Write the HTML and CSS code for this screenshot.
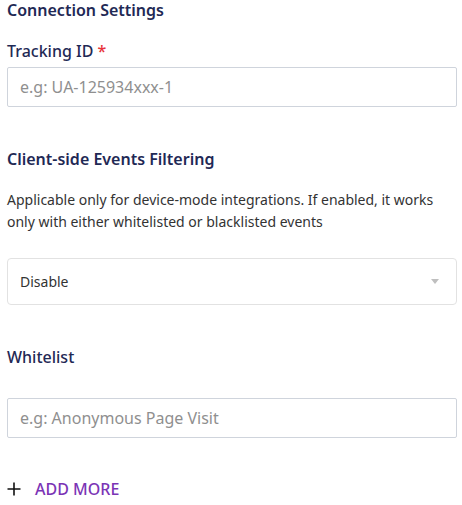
FILE: index.html
```html
<!DOCTYPE html>
<html lang="en">
<head>
<meta charset="utf-8">
<title>Connection Settings</title>
<link rel="stylesheet" href="styles.css">
</head>
<body>
<div class="form">
  <h2 class="section-title">Connection Settings</h2>
  <label class="field-label label-tracking">Tracking ID <span class="req">*</span></label>
  <input class="text-input" type="text" placeholder="e.g: UA-125934xxx-1">

  <h2 class="section-title title-filter">Client-side Events Filtering</h2>
  <p class="desc">Applicable only for device-mode integrations. If enabled, it works only with either whitelisted or blacklisted events</p>
  <div class="select">
    <span class="select-value">Disable</span>
    <span class="select-arrow"></span>
  </div>

  <label class="field-label label-whitelist">Whitelist</label>
  <input class="text-input input-whitelist" type="text" placeholder="e.g: Anonymous Page Visit">

  <div class="add-more">
    <svg class="plus" width="14" height="14" viewBox="0 0 14 14"><path d="M7 0.5V13.5M0.5 7H13.5" stroke="#111" stroke-width="1.6"/></svg>
    <span class="add-text">ADD MORE</span>
  </div>
</div>
</body>
</html>
```
FILE: styles.css
```css
html, body {
  margin: 0;
  padding: 0;
  background: #fff;
}
body {
  font-family: "Noto Sans", "Open Sans", sans-serif;
  color: #333;
}
.form {
  display: flex;
  flex-direction: column;
  padding: 0 5px 0 7px;
}
.section-title {
  margin: 0;
  font-size: 16px;
  line-height: 20px;
  font-weight: 600;
  color: #1f2955;
}
.title-filter {
  margin-top: 42px;
}
.field-label {
  display: block;
  font-size: 16px;
  line-height: 20px;
  font-weight: 500;
  color: #1f2955;
}
.label-tracking {
  margin-top: 21px;
}
.req {
  color: #e8333a;
}
.text-input {
  box-sizing: border-box;
  margin: 6px 0 0 0;
  width: 100%;
  height: 40px;
  border: 1px solid #cfd4dc;
  border-radius: 2px;
  padding: 0 12px;
  font-family: inherit;
  font-size: 16px;
  color: #333;
  outline: none;
}
.text-input::placeholder {
  color: #8f8f8f;
}
.desc {
  margin: 20px 0 0 0;
  font-size: 14px;
  line-height: 22px;
  color: #333;
}
.select {
  box-sizing: border-box;
  margin-top: 25px;
  height: 47px;
  border: 1px solid #e2e2e2;
  border-radius: 4px;
  display: flex;
  align-items: center;
  justify-content: space-between;
  padding: 0 17px 0 12px;
}
.select-value {
  font-size: 14px;
  color: #333;
}
.select-arrow {
  width: 0;
  height: 0;
  border-left: 4px solid transparent;
  border-right: 4px solid transparent;
  border-top: 5px solid #bfbfbf;
}
.label-whitelist {
  margin-top: 42px;
}
.input-whitelist {
  margin-top: 31px;
}
.add-more {
  margin-top: 41px;
  display: flex;
  align-items: center;
  gap: 14px;
  height: 20px;
}
.add-text {
  font-size: 16px;
  line-height: 20px;
  font-weight: 500;
  color: #7b34b5;
}
```
